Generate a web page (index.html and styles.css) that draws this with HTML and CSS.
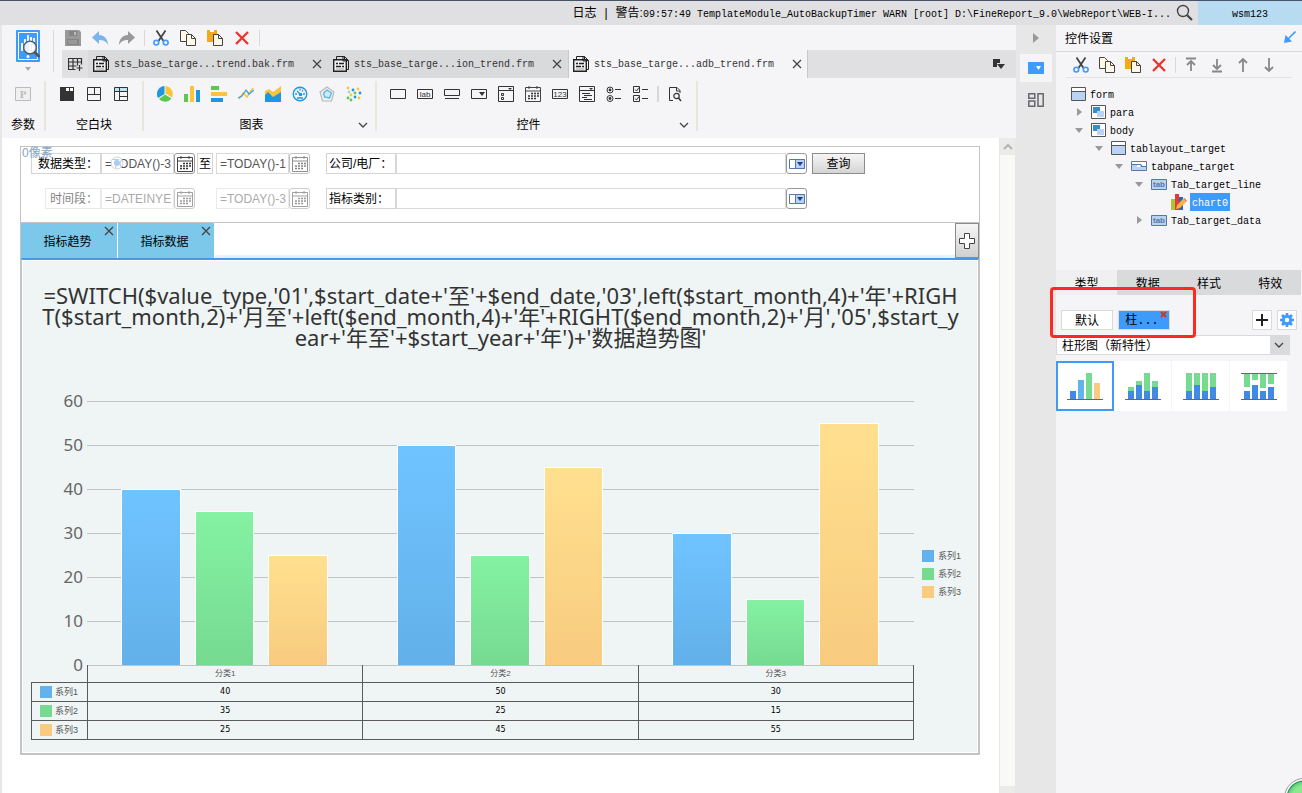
FILE: index.html
```
<!DOCTYPE html>
<html lang="zh-CN">
<head>
  <meta charset="UTF-8">
  <meta name="viewport" content="width=device-width, initial-scale=1.0">
  <title>FineReport Designer</title>
  <link rel="stylesheet" href="styles.css">
</head>
<body>
  <!-- Shared icons -->
  <svg class="defs">
    <symbol id="i-cut" viewBox="0 0 16 16"><path d="M3.5 0.5 10.5 11M12.5 0.5 5.5 11" stroke="#444" stroke-width="1.8" fill="none"/><circle cx="3.3" cy="12.6" r="2.4" fill="none" stroke="#3f9bf9" stroke-width="1.6"/><circle cx="12.7" cy="12.6" r="2.4" fill="none" stroke="#3f9bf9" stroke-width="1.6"/></symbol>
    <symbol id="i-copy" viewBox="0 0 16 16"><path d="M.5.5h5l3 3v8h-8z" fill="#fff8e6" stroke="#444"/><path d="M6.5 4.500h5l4 4v7h-9z" fill="#fff8e6" stroke="#444"/><path d="M11.500 4.500v4h4" fill="none" stroke="#444"/></symbol>
    <symbol id="i-paste" viewBox="0 0 16 16"><path d="M0 0h10v12H0z" fill="#f3a91c"/><path d="M3 0h4v2H3z" fill="#fff"/><path d="M6.500 4.500h5l4 4v7h-9z" fill="#fff8e6" stroke="#444"/><path d="M11.500 4.500v4h4" fill="none" stroke="#444"/></symbol>
    <symbol id="i-del" viewBox="0 0 16 16"><path d="M2 2l12 12M14 2L2 14" stroke="#e8382f" stroke-width="2.400"/></symbol>
    <symbol id="i-frm" viewBox="0 0 16 16"><path d="M3.500 3V.5H11.500l4 4v9H14" fill="none" stroke="#222"/><path d="M11.500.5v4h4" fill="none" stroke="#222"/><path d="M.7 3.700h12.600v11.600H.7z" fill="#f0f0f2" stroke="#222" stroke-width="1.400"/><path d="M10 1v4h4" fill="none" stroke="#222"/><path d="M3 7.500h2m1 0h5M3 10.500h5m1 0h2" stroke="#222" stroke-width="1.500"/><path d="M3 13h8" stroke="#aaa"/></symbol>
    <symbol id="i-x" viewBox="0 0 10 10"><path d="M1 1l8 8M9 1L1 9" stroke="#444" stroke-width="1.300"/></symbol>
    <symbol id="i-down" viewBox="0 0 10 10"><path d="M1 3l4 4 4-4" fill="none" stroke="#444" stroke-width="1.300"/></symbol>
    <symbol id="i-cal" viewBox="0 0 16 16"><path d="M.5 1.500h15v14H.5zM.5 5h15M4 0v3M12 0v3" fill="none" stroke="#444"/><path d="M6 7.500h8M3 10h11M3 12.500h9" stroke="#333" stroke-width="1.500" stroke-dasharray="2 1"/></symbol>
    <symbol id="i-drop" viewBox="0 0 16 10"><path d="M.5.5h15v9H.5z" fill="#fff" stroke="#5577b0"/><path d="M6.500.5h9v9h-9z" fill="#b7d2f2" stroke="#5577b0"/><path d="M8 3h6l-3 4z" fill="#223a8c"/></symbol>
    <symbol id="i-window" viewBox="0 0 15 14"><path d="M.5.5h14v13H.5z" fill="#fff" stroke="#555"/><path d="M1 4h13v9H1z" fill="#bad2f4"/><path d="M1 4.500h13" stroke="#555"/></symbol>
    <symbol id="i-layout" viewBox="0 0 15 14"><path d="M.5.5h14v13H.5z" fill="#fff" stroke="#555"/><path d="M2 2h7v6H2z" fill="#358ec9"/><path d="M6 6h7v6H6z" fill="#bad2f4"/></symbol>
  </svg>

  <header class="titlebar">
    <div class="log"><span>日志</span><span>|</span><span>警告:<span class="mono">09:57:49 TemplateModule_AutoBackupTimer WARN [root] D:\FineReport_9.0\WebReport\WEB-I...</span></span></div>
    <button class="icon-btn search" aria-label="搜索"><svg width="18" height="18" viewBox="0 0 18 18"><circle cx="7" cy="7" r="5.500" fill="none" stroke="#444" stroke-width="1.400"/><path d="M11 11l5 5" stroke="#444" stroke-width="2.200"/></svg></button>
    <div class="user mono">wsm123</div>
  </header>

  <div class="workspace">
    <div class="editor">
      <div class="toolbar">
        <div class="logo">
          <svg width="24" height="32" viewBox="0 0 24 32"><rect width="24" height="32" rx="1" fill="#3f9bf9"/><path d="M2.500 2.500h19v27h-19z" fill="none" stroke="#fff"/><path d="M6 21v-8M9 21V9M12 20V5M15 12V7M18 12V8" stroke="#fff" stroke-width="1.800"/><circle cx="14" cy="17.500" r="6.300" fill="#e5f2fe" stroke="#555" stroke-width="1.300"/><path d="M18.500 22l5 5" stroke="#555" stroke-width="2.800"/><path d="M14 13v9M17 15v5" stroke="#fff" stroke-width="2"/><circle cx="12" cy="26.500" r="1.500" fill="#fff"/></svg>
          <svg width="6" height="4" viewBox="0 0 6 4"><path d="M0 0h6L3 4z" fill="#aaa"/></svg>
        </div>
        <div class="toolbar-main">
          <div class="quick">
            <button class="icon-btn" aria-label="保存"><svg width="16" height="16" viewBox="0 0 16 16"><path d="M0 0h14l2 2v14H0z" fill="#999"/><path d="M4 1h8v5H4zM2 9h12v6H2z" fill="#858585"/><path d="M9 2h2v3H9z" fill="#bbb"/><path d="M3 11h9M3 13h9" stroke="#aaa"/></svg></button>
            <button class="icon-btn" aria-label="撤销"><svg width="16" height="16" viewBox="0 0 16 16"><path d="M7 1v4c5 0 9 4 9 10-2-4-5-5-9-5v4L0 7.500z" fill="#79b4f1"/></svg></button>
            <button class="icon-btn" aria-label="重做"><svg width="16" height="16" viewBox="0 0 16 16"><path d="M9 1v4C4 5 0 9 0 15c2-4 5-5 9-5v4l7-6.500z" fill="#999"/></svg></button>
            <span class="sep"></span>
            <button class="icon-btn" aria-label="剪切"><svg width="16" height="16"><use href="#i-cut"/></svg></button>
            <button class="icon-btn" aria-label="复制"><svg width="16" height="16"><use href="#i-copy"/></svg></button>
            <button class="icon-btn" aria-label="粘贴"><svg width="16" height="16"><use href="#i-paste"/></svg></button>
            <button class="icon-btn" aria-label="删除"><svg width="16" height="16"><use href="#i-del"/></svg></button>
            <span class="sep"></span>
          </div>
          <div class="file-tabs">
            <button class="icon-btn new-file" aria-label="新建"><svg width="15" height="15" viewBox="0 0 15 15"><path d="M7.500 12.500h-7V1.500h13v6M.5 5h13M.5 9h8M5 1.500v11M9.500 1.500v7M11.500 8v6M8.500 11h6" fill="none" stroke="#333" stroke-width="1.200"/></svg></button>
            <div class="file-tab"><svg width="16" height="16"><use href="#i-frm"/></svg><span class="mono">sts_base_targe...trend.bak.frm</span><button class="icon-btn" aria-label="关闭"><svg width="10" height="10"><use href="#i-x"/></svg></button></div>
            <div class="file-tab"><svg width="16" height="16"><use href="#i-frm"/></svg><span class="mono">sts_base_targe...ion_trend.frm</span><button class="icon-btn" aria-label="关闭"><svg width="10" height="10"><use href="#i-x"/></svg></button></div>
            <div class="file-tab active"><svg width="16" height="16"><use href="#i-frm"/></svg><span class="mono">sts_base_targe...adb_trend.frm</span><button class="icon-btn" aria-label="关闭"><svg width="10" height="10"><use href="#i-x"/></svg></button></div>
            <button class="icon-btn tab-list" aria-label="全部模板"><svg width="12" height="10" viewBox="0 0 12 10"><path d="M0 0h7v4H4v4H0z" fill="#333"/><path d="M4 5h8L8 10z" fill="#333"/></svg></button>
          </div>
        </div>
      </div>

      <div class="ribbon">
        <div class="group">
          <div class="icons">
            <svg width="16" height="16" viewBox="0 0 16 16"><path d="M.5 1.500h15v13H.5z" fill="#f0f0f0" stroke="#bbb"/><text x="8" y="12" font-size="11" font-weight="bold" font-family="Liberation Serif, serif" text-anchor="middle" fill="#bbb">P</text></svg>
          </div>
          <div class="group-name">参数</div>
        </div>
        <div class="group">
          <div class="icons">
            <svg width="16" height="16" viewBox="0 0 16 16"><path d="M1 1h14v14H1z" fill="#333"/><path d="M7 2h3v3H7zM11 2h3v3h-3z" fill="#fff"/></svg>
            <svg width="16" height="16" viewBox="0 0 16 16"><path d="M1.500 1.500h13v13h-13zM1.500 8.500h13M8.500 1.500v7" fill="none" stroke="#333"/></svg>
            <svg width="16" height="16" viewBox="0 0 16 16"><path d="M2 2h12v3H2z" fill="#bfe3f7"/><path d="M1.500 1.500h13v13h-13zM1.500 5.500h13M6.500 1.500v13M6 10.500h9" fill="none" stroke="#333"/></svg>
          </div>
          <div class="group-name">空白块</div>
        </div>
        <div class="group">
          <div class="icons">
            <svg width="16" height="16" viewBox="0 0 16 16"><path d="M7.500 8V0A8 8 0 0 0 1 12z" fill="#2196e0"/><path d="M8.500 7.500V0A8 8 0 0 1 15 11.500z" fill="#fbc43a"/><path d="M8 8.500l6.500 4A8 8 0 0 1 2 13z" fill="#59c94f"/></svg>
            <svg width="16" height="16" viewBox="0 0 16 16"><path d="M0 8h4v8H0z" fill="#59c94f"/><path d="M6 0h4v16H6z" fill="#fbc43a"/><path d="M12 4h4v12h-4z" fill="#2196e0"/></svg>
            <svg width="16" height="16" viewBox="0 0 16 16"><path d="M0 0h8v4H0z" fill="#59c94f"/><path d="M0 6h16v4H0z" fill="#fbc43a"/><path d="M0 12h12v4H0z" fill="#2196e0"/></svg>
            <svg width="16" height="16" viewBox="0 0 16 16"><path d="M1 13l4-6 4 4 6-9" fill="none" stroke="#fbc43a" stroke-width="1.500"/><path d="M0 12l4-2 4-6 3 4 5-4" fill="none" stroke="#3e9fe0" stroke-width="1.300"/></svg>
            <svg width="16" height="16" viewBox="0 0 16 16"><path d="M0 5l4-2 4 3 8-6v11H0z" fill="#fbc43a"/><path d="M0 9l3-3 5 5 8-5v10H0z" fill="#2196e0"/></svg>
            <svg width="16" height="16" viewBox="0 0 16 16"><circle cx="8" cy="8" r="6.800" fill="none" stroke="#2196e0" stroke-width="1.400"/><path d="M5 5l4 4M8 2.500v2M13 8h-2M5 8H3M11 4l-1 1.500" stroke="#2196e0" stroke-width="1.300"/><circle cx="8.500" cy="8.500" r="1.800" fill="#2196e0"/><path d="M5 12h6" stroke="#2196e0" stroke-width="1.500"/></svg>
            <svg width="16" height="16" viewBox="0 0 16 16"><path d="M8 1l7 5-2.500 9h-9L1 6z" fill="#eee" stroke="#bbb" stroke-width="1.200"/><path d="M8 4l4.500 3-2 5-5-1-1-4z" fill="#cdeaf8" stroke="#57b7ea" stroke-width="1.300"/></svg>
            <svg width="16" height="16" viewBox="0 0 16 16"><g fill="#fbc43a"><circle cx="2" cy="2" r="1.400"/><circle cx="12" cy="3" r="1.400"/><circle cx="5" cy="9" r="1.400"/><circle cx="13" cy="12" r="1.400"/></g><g fill="#2196e0"><circle cx="7" cy="4" r="1.400"/><circle cx="14" cy="7" r="1.400"/><circle cx="9" cy="11" r="1.400"/></g><g fill="#59c94f"><circle cx="2" cy="12" r="1.400"/><circle cx="9" cy="7" r="1.400"/><circle cx="5" cy="14" r="1.400"/></g><circle cx="3" cy="6" r="1.400" fill="#9bd3f0"/></svg>
          </div>
          <div class="group-name more">图表<svg width="10" height="10"><use href="#i-down"/></svg></div>
        </div>
        <div class="group">
          <div class="icons">
            <svg width="16" height="16" viewBox="0 0 16 16"><path d="M.5 3.500h15v9H.5z" fill="none" stroke="#333"/></svg>
            <svg width="16" height="16" viewBox="0 0 16 16"><path d="M.5 3.500h15v9H.5z" fill="none" stroke="#333"/><text x="8" y="11" font-size="8" text-anchor="middle" fill="#333" font-family="Liberation Sans, sans-serif">lab</text></svg>
            <svg width="16" height="16" viewBox="0 0 16 16"><path d="M.5 3.500h15v6H.5zM1 12.500h14" fill="none" stroke="#333"/></svg>
            <svg width="16" height="16" viewBox="0 0 16 16"><path d="M.5 3.500h15v9H.5z" fill="none" stroke="#333"/><path d="M8 6h6l-3 4z" fill="#333"/></svg>
            <svg width="16" height="16" viewBox="0 0 16 16"><path d="M.5.5h15v15H.5zM.5 4.500h15M3.500 7.500h2v2h-2zM3.500 11.500h2v2h-2z" fill="none" stroke="#333"/><path d="M10 2h4l-2 2z" fill="#333"/></svg>
            <svg width="16" height="16"><use href="#i-cal"/></svg>
            <svg width="16" height="16" viewBox="0 0 16 16"><path d="M.5 3.500h15v9H.5z" fill="none" stroke="#333"/><text x="8" y="11" font-size="8" text-anchor="middle" fill="#333" font-family="Liberation Sans, sans-serif">123</text></svg>
            <svg width="16" height="16" viewBox="0 0 16 16"><path d="M.5.5h15v15H.5zM.5 4.500h15M3 7.500h8M5 9.500h8M3 11.500h5M5 13.500h8" fill="none" stroke="#333"/><path d="M10 2h4l-2 2z" fill="#333"/></svg>
            <svg width="16" height="16" viewBox="0 0 16 16"><circle cx="4" cy="4" r="3" fill="none" stroke="#333"/><circle cx="4" cy="4" r="1.400" fill="#333"/><circle cx="4" cy="12.500" r="3" fill="none" stroke="#333"/><circle cx="4" cy="12.500" r="1.400" fill="#333"/><path d="M9 3.500h6M9 12.500h6" stroke="#333"/></svg>
            <svg width="16" height="16" viewBox="0 0 16 16"><path d="M.5.5h6v6h-6zM.5 9.500h6v6h-6zM9 3.500h6M9 12.500h6M2 3.500L3.500 5 6 1.500M2 12.500L3.500 14 6 10.500" fill="none" stroke="#333"/></svg>
            <span class="sep"></span>
            <svg width="16" height="16" viewBox="0 0 16 16"><path d="M6 14.500H2.500v-13H10l3 3V7" fill="none" stroke="#333"/><path d="M9.500 1.500V5H13" fill="none" stroke="#333"/><circle cx="9.500" cy="10" r="2.700" fill="none" stroke="#333" stroke-width="1.200"/><path d="M11.500 12l2.500 3" stroke="#333" stroke-width="1.500"/></svg>
          </div>
          <div class="group-name more">控件<svg width="10" height="10"><use href="#i-down"/></svg></div>
        </div>
      </div>

      <div class="canvas">
        <div class="form">
          <span class="size-hint">0像素</span>
          <div class="params">
            <label for="startDate">数据类型：</label>
            <div class="field">
              <input type="text" id="startDate" value="=TODAY()-3">
              <button aria-label="日历"><svg width="16" height="16"><use href="#i-cal"/></svg></button>
              <svg class="ghost" width="18" height="14" viewBox="0 0 18 14"><circle cx="7" cy="7" r="6" fill="#fff" fill-opacity=".7" stroke="#ccd5e0"/><circle cx="7" cy="7" r="3" fill="#a9cdf5"/></svg>
            </div>
            <label class="to" for="endDate">至</label>
            <div class="field">
              <input type="text" id="endDate" value="=TODAY()-1">
              <button class="pale" aria-label="日历"><svg width="16" height="16"><use href="#i-cal"/></svg></button>
            </div>
            <label class="col-right" for="company">公司/电厂：</label>
            <div class="field">
              <input type="text" id="company">
              <button aria-label="展开"><svg width="16" height="10"><use href="#i-drop"/></svg></button>
            </div>
            <button class="query">查询</button>

            <label class="row2 faded" for="period">时间段：</label>
            <div class="field faded">
              <input type="text" id="period" value="=DATEINYE">
              <button aria-label="日历"><svg width="16" height="16"><use href="#i-cal"/></svg></button>
            </div>
            <div class="field faded col-end">
              <input type="text" aria-label="结束" value="=TODAY()-3">
              <button aria-label="日历"><svg width="16" height="16"><use href="#i-cal"/></svg></button>
            </div>
            <label class="col-right" for="kpi">指标类别：</label>
            <div class="field">
              <input type="text" id="kpi">
              <button aria-label="展开"><svg width="16" height="10"><use href="#i-drop"/></svg></button>
            </div>
          </div>

          <div class="form-tabs">
            <div class="form-tab">指标趋势<button class="icon-btn" aria-label="关闭"><svg width="10" height="10"><use href="#i-x"/></svg></button></div>
            <div class="form-tab">指标数据<button class="icon-btn" aria-label="关闭"><svg width="10" height="10"><use href="#i-x"/></svg></button></div>
            <button class="add-tab" aria-label="添加"><svg width="16" height="16" viewBox="0 0 16 16"><path d="M5.500.5h5v5h5v5h-5v5h-5v-5h-5v-5h5z" fill="#fff" stroke="#444" stroke-linejoin="round"/></svg></button>
          </div>

          <div class="chart">
            <div class="chart-title">=SWITCH($value_type,'01',$start_date+'至'+$end_date,'03',left($start_month,4)+'年'+RIGH<br>T($start_month,2)+'月至'+left($end_month,4)+'年'+RIGHT($end_month,2)+'月','05',$start_y<br>ear+'年至'+$start_year+'年')+'数据趋势图'</div>
            <div class="chart-body">
              <div class="y-axis"><span>60</span><span>50</span><span>40</span><span>30</span><span>20</span><span>10</span><span>0</span></div>
              <div class="plot">
                <div class="category"><i class="bar s1" style="--v: 40"></i><i class="bar s2" style="--v: 35"></i><i class="bar s3" style="--v: 25"></i></div>
                <div class="category"><i class="bar s1" style="--v: 50"></i><i class="bar s2" style="--v: 25"></i><i class="bar s3" style="--v: 45"></i></div>
                <div class="category"><i class="bar s1" style="--v: 30"></i><i class="bar s2" style="--v: 15"></i><i class="bar s3" style="--v: 55"></i></div>
              </div>
              <ul class="legend">
                <li><i class="swatch s1"></i>系列1</li>
                <li><i class="swatch s2"></i>系列2</li>
                <li><i class="swatch s3"></i>系列3</li>
              </ul>
            </div>
            <table class="data-table">
              <thead>
                <tr><td></td><th>分类1</th><th>分类2</th><th>分类3</th></tr>
              </thead>
              <tbody>
                <tr><th><i class="swatch s1"></i>系列1</th><td>40</td><td>50</td><td>30</td></tr>
                <tr><th><i class="swatch s2"></i>系列2</th><td>35</td><td>25</td><td>15</td></tr>
                <tr><th><i class="swatch s3"></i>系列3</th><td>25</td><td>45</td><td>55</td></tr>
              </tbody>
            </table>
          </div>
        </div>
        <div class="scrollbar">
          <button class="icon-btn" aria-label="向上滚动"><svg width="10" height="8" viewBox="0 0 10 8"><path d="M1 6l4-4 4 4" fill="none" stroke="#b5b5b5" stroke-width="2"/></svg></button>
          <button class="icon-btn end" aria-label="向下滚动"></button>
        </div>
      </div>
    </div>

    <div class="rail">
      <button class="icon-btn collapse" aria-label="收起"><svg width="6" height="10" viewBox="0 0 6 10"><path d="M0 0l6 5-6 5z" fill="#999"/></svg></button>
      <button class="icon-btn rail-btn active" aria-label="控件设置"><svg width="16" height="12" viewBox="0 0 16 12"><path d="M0 0h16v12H0z" fill="#3f9bf9"/><path d="M8 4h5l-2.500 4z" fill="#fff"/></svg></button>
      <button class="icon-btn rail-btn" aria-label="组件"><svg width="16" height="14" viewBox="0 0 16 14"><path d="M.8.800h6v4.500h-6zM.8 8h6v5.200h-6zM10 .8h5.200v12.400H10z" fill="none" stroke="#66666e" stroke-width="1.500"/></svg></button>
    </div>

    <aside class="panel">
      <div class="panel-head">控件设置<svg width="12" height="12" viewBox="0 0 12 12"><path d="M11.500.5L4 8" stroke="#3f9bf9" stroke-width="1.600"/><path d="M0 12l1.500-8L8 10.500z" fill="#3f9bf9"/></svg></div>
      <div class="panel-tools">
        <button class="icon-btn" aria-label="剪切"><svg width="16" height="16"><use href="#i-cut"/></svg></button>
        <button class="icon-btn" aria-label="复制"><svg width="16" height="16"><use href="#i-copy"/></svg></button>
        <button class="icon-btn" aria-label="粘贴"><svg width="16" height="16"><use href="#i-paste"/></svg></button>
        <button class="icon-btn" aria-label="删除"><svg width="16" height="16"><use href="#i-del"/></svg></button>
        <span class="sep"></span>
        <button class="icon-btn" aria-label="置顶"><svg width="16" height="16" viewBox="0 0 16 16"><path d="M3 1.500h10M8 4v10M4 8l4-4 4 4" fill="none" stroke="#888" stroke-width="1.800"/></svg></button>
        <button class="icon-btn" aria-label="置底"><svg width="16" height="16" viewBox="0 0 16 16"><path d="M3 14.500h10M8 2v10M4 8l4 4 4-4" fill="none" stroke="#888" stroke-width="1.800"/></svg></button>
        <button class="icon-btn" aria-label="上移"><svg width="16" height="16" viewBox="0 0 16 16"><path d="M8 2v13M4 6l4-4 4 4" fill="none" stroke="#888" stroke-width="1.800"/></svg></button>
        <button class="icon-btn" aria-label="下移"><svg width="16" height="16" viewBox="0 0 16 16"><path d="M8 1v13M4 10l4 4 4-4" fill="none" stroke="#888" stroke-width="1.800"/></svg></button>
      </div>

      <ul class="tree mono">
        <li>
          <div class="node"><span class="arrow"></span><svg width="15" height="14"><use href="#i-window"/></svg><span>form</span></div>
          <ul>
            <li><div class="node"><span class="arrow closed"></span><svg width="15" height="14"><use href="#i-layout"/></svg><span>para</span></div></li>
            <li>
              <div class="node"><span class="arrow open"></span><svg width="15" height="14"><use href="#i-layout"/></svg><span>body</span></div>
              <ul>
                <li>
                  <div class="node"><span class="arrow open"></span><svg width="15" height="14"><use href="#i-window"/></svg><span>tablayout_target</span></div>
                  <ul>
                    <li>
                      <div class="node"><span class="arrow open"></span><svg width="16" height="10" viewBox="0 0 16 10"><path d="M.5.5h15v9H.5z" fill="#fff" stroke="#5577b0"/><path d="M1 4h5v2h9v3H1z" fill="#bad2f4"/><path d="M1 3.500h9v2h5M10.500 4v2" fill="none" stroke="#5577b0"/></svg><span>tabpane_target</span></div>
                      <ul>
                        <li>
                          <div class="node"><span class="arrow open"></span><svg width="16" height="11" viewBox="0 0 16 11"><path d="M.5.5h15v10H.5z" fill="#b9d3ee" stroke="#5577b0"/><text x="8" y="8" font-size="8" text-anchor="middle" fill="#5577a8" font-family="Liberation Sans, sans-serif" font-weight="bold">tab</text></svg><span>Tab_target_line</span></div>
                          <ul>
                            <li><div class="node"><span class="arrow"></span><svg width="16" height="16" viewBox="0 0 16 16"><path d="M0 5h4v11H0z" fill="#a8c63c"/><path d="M4 0h4v16H4z" fill="#e8382f"/><path d="M8 3h4v13H8z" fill="#1e6db0"/><path d="M5 15l1-4 6-6 3 3-6 6z" fill="#fbb040"/><path d="M12 5l3 3 1-1.500L13.500 4z" fill="#f08060"/></svg><span class="selected">chart0</span></div></li>
                          </ul>
                        </li>
                        <li><div class="node"><span class="arrow closed"></span><svg width="16" height="11" viewBox="0 0 16 11"><path d="M.5.5h15v10H.5z" fill="#b9d3ee" stroke="#5577b0"/><text x="8" y="8" font-size="8" text-anchor="middle" fill="#5577a8" font-family="Liberation Sans, sans-serif" font-weight="bold">tab</text></svg><span>Tab_target_data</span></div></li>
                      </ul>
                    </li>
                  </ul>
                </li>
              </ul>
            </li>
          </ul>
        </li>
      </ul>

      <div class="prop-tabs">
        <button class="active">类型</button>
        <button>数据</button>
        <button>样式</button>
        <button>特效</button>
      </div>
      <div class="chart-switch">
        <button>默认</button>
        <button class="current">柱...<svg width="7" height="7" viewBox="0 0 7 7"><path d="M1 1l5 5M6 1L1 6" stroke="#d03528" stroke-width="2"/></svg></button>
        <div class="chart-actions">
          <button class="square" aria-label="添加"><svg width="12" height="12" viewBox="0 0 12 12"><path d="M6 0v12M0 6h12" stroke="#222" stroke-width="2"/></svg></button>
          <button class="square" aria-label="设置"><svg width="14" height="14" viewBox="0 0 14 14"><circle cx="7" cy="7" r="3.800" fill="none" stroke="#3f9bf9" stroke-width="3"/><path d="M7 0v2.500M7 11.500V14M0 7h2.500M11.500 7H14M2 2l2 2M10 10l2 2M12 2l-2 2M4 10l-2 2" stroke="#3f9bf9" stroke-width="2.600"/></svg></button>
        </div>
        <span class="highlight"></span>
      </div>
      <div class="type-select">
        <select aria-label="图表类型"><option>柱形图（新特性）</option></select>
        <svg width="10" height="10"><use href="#i-down"/></svg>
      </div>
      <div class="type-list">
        <button class="active" aria-label="柱形图"><svg width="36" height="28" viewBox="0 0 36 28"><path d="M3 19h6v8H3z" fill="#3f8ae6"/><path d="M11 8h6v19h-6z" fill="#63b2ee"/><path d="M19 1h6v26h-6z" fill="#76da91"/><path d="M27 11h6v16h-6z" fill="#f8cb7f"/><path d="M0 27.500h36" stroke="#666"/></svg></button>
        <button aria-label="堆积柱形图"><svg width="36" height="28" viewBox="0 0 36 28"><path d="M3 15h6v4H3zM11 9h6v4h-6zM19 1h6v18h-6zM27 9h6v6h-6z" fill="#76da91"/><path d="M3 19h6v8H3zM11 13h6v14h-6zM19 19h6v8h-6zM27 15h6v12h-6z" fill="#3f8ae6"/><path d="M0 27.500h36" stroke="#666"/></svg></button>
        <button aria-label="百分比堆积柱形图"><svg width="36" height="28" viewBox="0 0 36 28"><path d="M3 1h6v18H3zM11 1h6v12h-6zM19 1h6v18h-6zM27 1h6v14h-6z" fill="#76da91"/><path d="M3 19h6v8H3zM11 13h6v14h-6zM19 19h6v8h-6zM27 15h6v12h-6z" fill="#3f8ae6"/><path d="M0 27.500h36" stroke="#666"/></svg></button>
        <button aria-label="自定义柱形图"><svg width="36" height="28" viewBox="0 0 36 28"><path d="M3 2h6v13H3zM11 2h6v6h-6zM19 2h6v14h-6zM27 2h6v10h-6z" fill="#76da91"/><path d="M3 19h6v8H3zM11 13h6v14h-6zM19 19h6v8h-6zM27 15h6v12h-6z" fill="#3f8ae6"/><path d="M0 1.500h36M0 27.500h36" stroke="#666"/></svg></button>
      </div>
    </aside>
  </div>
  <div class="float-ball"></div>
</body>
</html>
```

FILE: styles.css
```
* {
  box-sizing: border-box;
}

body {
  margin: 0;
  height: 100vh;
  display: flex;
  flex-direction: column;
  position: relative;
  overflow: hidden;
  background-color: #f5f5f7;
  color: #000;
  font-family: "Liberation Sans", "Noto Sans CJK SC", sans-serif;
  font-size: 12px;
  line-height: 16px;
}

ul {
  list-style: none;
  margin: 0;
  padding: 0;
}

button, input, select {
  font: inherit;
  color: inherit;
  margin: 0;
  padding: 0;
  border: none;
  border-radius: 0;
  background: none;
}

svg {
  display: block;
  flex: none;
}

.defs {
  position: absolute;
  width: 0;
  height: 0;
}

.mono {
  font-family: "Liberation Mono", "Noto Sans CJK SC", monospace;
  font-size: 10px;
}

.icon-btn {
  display: flex;
  align-items: center;
  justify-content: center;
  flex: none;
}

.sep {
  width: 1px;
  height: 16px;
  background-color: #d8d8da;
}

/* Title bar */
.titlebar {
  display: flex;
  align-items: center;
  justify-content: flex-end;
  height: 25px;
  flex: none;
  border-top: 1px solid #4a5468;
  background-color: #e0e0e2;
}

.log {
  display: flex;
  gap: 8px;
  padding-top: 2px;
  white-space: nowrap;
}

.search {
  margin: 0 4px 0 5px;
}

.user {
  width: 104px;
  height: 24px;
  line-height: 28px;
  text-align: center;
  background-color: #b7dcf2;
}

.workspace {
  display: flex;
  flex: 1;
  min-height: 0;
}

/* Editor */
.editor {
  flex: 1;
  min-width: 0;
  display: flex;
  flex-direction: column;
  border-left: 2px solid #e7e7e7;
}

.toolbar {
  display: flex;
}

.logo {
  display: flex;
  flex-direction: column;
  align-items: center;
  gap: 5px;
  width: 52px;
  height: 42px;
  margin: 5px 8px 0 0;
  border-right: 1px solid #d8d8da;
}

.toolbar-main {
  flex: 1;
  min-width: 0;
}

.quick {
  display: flex;
  align-items: center;
  gap: 11px;
  height: 25px;
  padding-left: 3px;
}

.quick .sep {
  margin: 0 -3px 0 -2px;
}

.file-tabs {
  display: flex;
  align-items: center;
  height: 28px;
  background-color: #e0e0e2;
}

.new-file {
  width: 26px;
}

.file-tab {
  display: flex;
  align-items: center;
  gap: 5px;
  width: 240px;
  height: 28px;
  padding: 0 6px 0 5px;
  background-color: #d9dadc;
  color: #333;
}

.file-tab .mono {
  padding-top: 2px;
}

.file-tab .icon-btn {
  margin-left: auto;
}

.file-tab.active {
  padding: 0 5px 0 4px;
  background-color: #f5f5f7;
  border: 1px solid #c8c8ca;
  border-width: 0 1px;
}

.tab-list {
  margin: 0 11px 0 auto;
}

.ribbon {
  display: flex;
  height: 60px;
  flex: none;
  padding-top: 3px;
}

.group {
  height: 50px;
  padding: 5px 13px 0;
  border-right: 2px solid #e9e6da;
}

.icons {
  display: flex;
  align-items: center;
  gap: 11px;
}

.icons .sep {
  margin: 0 -3px;
  width: 2px;
}

.group-name {
  position: relative;
  margin-top: 15px;
  text-align: center;
  white-space: nowrap;
}

.group-name.more {
  padding-right: 16px;
}

.group:first-child .group-name {
  margin-left: -5px;
  margin-right: -5px;
}

.group-name svg {
  position: absolute;
  right: -6px;
  top: 3px;
}

/* Design canvas */
.canvas {
  flex: 1;
  min-height: 0;
  display: flex;
  background-color: #fff;
}

.form {
  position: relative;
  flex: 1;
  min-width: 0;
  align-self: flex-start;
  margin: 8px 19px 0 18px;
  border: 1px solid #c4c4c4;
}

.size-hint {
  position: absolute;
  left: 1px;
  top: -2px;
  color: #86a5c6;
}

.params {
  display: grid;
  grid-template-columns: 70px 94px 21px 94px 16px 70px 1fr 58px;
  grid-auto-rows: 21px;
  row-gap: 14px;
  height: 75px;
  padding: 6px 114px 0 10px;
}

.params label {
  border: 1px solid #d4d4d4;
  line-height: 20px;
  padding-left: 6px;
  white-space: nowrap;
  overflow: hidden;
}

.params .to {
  margin: 0 3px 0 2px;
  padding-left: 1px;
}

.params .col-right {
  grid-column: 6;
  padding-left: 2px;
}

.params .row2 {
  grid-column: 1;
  grid-row: 2;
  margin-left: 14px;
  padding-left: 4px;
}

.col-end {
  grid-column: 4;
}

.field {
  position: relative;
  display: flex;
}

.field input {
  flex: 1;
  min-width: 0;
  padding-left: 3px;
  border: 1px solid #d9d9d9;
  color: #555;
}

.field button {
  display: flex;
  align-items: center;
  justify-content: center;
  width: 21px;
  border: 1px solid #999;
  border-radius: 3px;
}

.ghost {
  position: absolute;
  left: 9px;
  top: 3px;
}

.faded {
  opacity: 0.5;
}

.field .pale {
  opacity: 0.6;
}

.query {
  margin-left: 5px;
  border: 1px solid #8c8c8c;
  background: linear-gradient(#f6f6f6, #d4d4d4);
}

.form-tabs {
  display: flex;
  height: 36px;
  border-top: 1px solid #c4c4c4;
  background: linear-gradient(#fff 32px, #e6f1fc 32px);
}

.form-tab {
  position: relative;
  width: 97px;
  padding-right: 3px;
  line-height: 38px;
  text-align: center;
  border-right: 1px solid #fff;
  background-color: #7bc8ea;
}

.form-tab .icon-btn {
  position: absolute;
  top: 3px;
  right: 3px;
}

.add-tab {
  display: flex;
  align-items: center;
  justify-content: center;
  width: 24px;
  margin-left: auto;
  border: 1px solid #8c8c8c;
  background: linear-gradient(#f6f6f6, #d0d0d0);
}

/* Chart */
.chart {
  padding: 25px 0 13px 9px;
  border: 1px solid #c4c4c4;
  border-top: 2px solid #4a98e8;
  box-shadow: inset 0 0 0 1px #fff;
  background-color: #eff5f5;
}

.chart-title {
  margin-right: 8px;
  color: #333;
  font-family: "Noto Sans", "Noto Sans CJK SC", sans-serif;
  font-size: 22px;
  line-height: 21px;
  text-align: center;
  white-space: nowrap;
}

.chart-body {
  display: grid;
  grid-template-columns: 56px 1fr 64px;
  margin-top: 53px;
}

.y-axis {
  display: flex;
  flex-direction: column;
  margin: -22px 4px -22px 0;
  color: #666;
  font-family: "Noto Sans", sans-serif;
  font-size: 17px;
  line-height: 44px;
  text-align: right;
}

.plot {
  display: flex;
  height: 264px;
  background: repeating-linear-gradient(#c0c4c4 0 1px, transparent 1px 44px);
}

.category {
  flex: 1;
  display: flex;
  align-items: flex-end;
  gap: 14px;
  padding: 0 35px 0 34px;
}

.bar {
  flex: 1;
  height: calc(var(--v) / 60 * 100%);
  border: 1px solid #fff;
  border-bottom: none;
}

.s1 {
  background: linear-gradient(#6fc4ff, #63b0ea);
}

.s2 {
  background: linear-gradient(#84f2a2, #76da91);
}

.s3 {
  background: linear-gradient(#ffe08f, #f8cb7f);
}

.swatch {
  display: block;
  width: 12px;
  height: 12px;
}

.swatch.s1 {
  background: #63b2ee;
}

.swatch.s2 {
  background: #76da91;
}

.swatch.s3 {
  background: #f8cb7f;
}

.legend {
  display: flex;
  flex-direction: column;
  gap: 6px;
  padding: 149px 0 0 8px;
  color: #555;
  font-size: 9px;
  line-height: 12px;
}

.legend li {
  display: flex;
  gap: 4px;
}

.data-table {
  width: calc(100% - 64px);
  table-layout: fixed;
  border-collapse: collapse;
  font-family: "DejaVu Sans", "Noto Sans CJK SC", sans-serif;
  font-size: 8px;
  line-height: 12px;
  text-align: center;
}

.data-table th, .data-table td {
  height: 19px;
  padding: 0;
  border: 1px solid #5a5a5a;
}

.data-table th {
  color: #555;
  font-family: "Liberation Sans", "Noto Sans CJK SC", sans-serif;
  font-weight: normal;
}

.data-table thead td {
  width: 56px;
  border-top: none;
  border-left: none;
}

.data-table thead th, .data-table thead td {
  height: 17px;
  border-top-color: #c0c4c4;
}

.data-table .swatch {
  float: left;
  margin: 0 3px 0 8px;
}

.data-table tbody th {
  font-size: 9px;
  text-align: left;
}

.scrollbar {
  display: flex;
  flex-direction: column;
  justify-content: space-between;
  width: 17px;
  border: 1px solid #e9e8e0;
  border-width: 0 1px;
  background-color: #f9f9f7;
}

.scrollbar .icon-btn {
  width: 15px;
  height: 17px;
  background-color: #ebebe9;
}

.scrollbar .end {
  height: 7px;
}

/* Right rail */
.rail {
  display: flex;
  flex-direction: column;
  align-items: center;
  width: 40px;
  background-color: #e7e7e7;
}

.collapse {
  height: 25px;
  margin-bottom: 4px;
}

.rail-btn {
  width: 32px;
  height: 28px;
  margin-bottom: 4px;
}

.rail-btn.active {
  background-color: #f5f5f7;
}

/* Widget panel */
.panel {
  width: 246px;
}

.panel-head {
  display: flex;
  justify-content: space-between;
  height: 27px;
  padding: 6px 6px 0 9px;
  border-bottom: 1px solid #d8d8da;
}

.panel-tools {
  display: flex;
  align-items: center;
  gap: 10px;
  height: 26px;
  margin: 0 10px;
  padding-left: 7px;
  border-bottom: 1px solid #e3e3e5;
}

.panel-tools .sep {
  margin: 0 -3px 0 -2px;
}

.tree {
  height: 192px;
  padding-top: 7px;
}

.tree ul {
  padding-left: 20px;
}

.node {
  display: flex;
  align-items: center;
  height: 18px;
  line-height: 18px;
  white-space: nowrap;
}

.node span:last-child {
  height: 18px;
  padding: 2px 0 0 4px;
}

.node .selected:last-child {
  padding: 2px 2px 0;
  margin-left: 3px;
  color: #fff;
  background-color: #3f9bf9;
}

.arrow {
  width: 8px;
  margin-right: 8px;
  margin-left: -1px;
}

.arrow.open {
  border: 4px solid transparent;
  border-top: 5px solid #999;
  border-bottom: none;
}

.arrow.closed {
  width: 5px;
  margin-left: 1px;
  margin-right: 9px;
  border: 4px solid transparent;
  border-left: 5px solid #999;
  border-right: none;
}

.prop-tabs {
  display: flex;
  height: 25px;
  margin-right: 1px;
  background-color: #d9dadc;
}

.prop-tabs button {
  flex: 1;
  padding-top: 2px;
}

.prop-tabs .active {
  background-color: #f0f0f2;
}

.chart-switch {
  position: relative;
  display: flex;
  gap: 5px;
  padding: 15px 5px 5px;
}

.chart-switch button {
  position: relative;
  width: 52px;
  height: 20px;
  padding-top: 2px;
  border: 1px solid #d9dadc;
  background-color: #fff;
}

.chart-switch .current {
  padding-right: 4px;
  background-color: #3f9bf9;
  font-family: "Noto Sans CJK SC", sans-serif;
  font-family: "Liberation Mono", "Noto Sans CJK SC", monospace;
  line-height: 14px;
}

.current svg {
  position: absolute;
  top: 0;
  right: 2px;
}

.chart-actions {
  display: flex;
  gap: 5px;
  margin-left: auto;
}

.chart-switch .square {
  display: flex;
  align-items: center;
  justify-content: center;
  width: 20px;
  padding: 0;
}

/* Red frame round the chart switcher */
.highlight {
  position: absolute;
  left: -6px;
  top: -8px;
  width: 146px;
  height: 51px;
  border: 3px solid #ff2a1f;
  border-radius: 4px;
  pointer-events: none;
}

.type-select {
  display: grid;
  grid-template-columns: 1fr 20px;
  align-items: center;
  justify-items: center;
  width: 234px;
  height: 20px;
  border: 1px solid #d9dadc;
  background: linear-gradient(to left, #d9dadc 19px, #fff 19px);
}

.type-select select {
  grid-area: 1 / 1 / 2 / 3;
  width: 100%;
  height: 18px;
  padding: 2px 0 0 5px;
  appearance: none;
}

.type-select svg {
  grid-area: 1 / 2;
  pointer-events: none;
}

.type-list {
  display: flex;
  width: 232px;
  margin-top: 6px;
}

.type-list button {
  display: flex;
  align-items: center;
  justify-content: center;
  width: 58px;
  height: 50px;
  border-right: 1px solid #f5f5f7;
  background-color: #fff;
}

.type-list .active {
  border: 2px solid #3f9bf9;
}

.float-ball {
  position: absolute;
  right: -22px;
  bottom: -25px;
  width: 40px;
  height: 40px;
  border: 1px solid #999;
  border-radius: 50%;
  background: radial-gradient(circle, #8be88f 0 12px, #5fd07a 16px, #1f8a4a 17px, #fff 18px);
}
```
